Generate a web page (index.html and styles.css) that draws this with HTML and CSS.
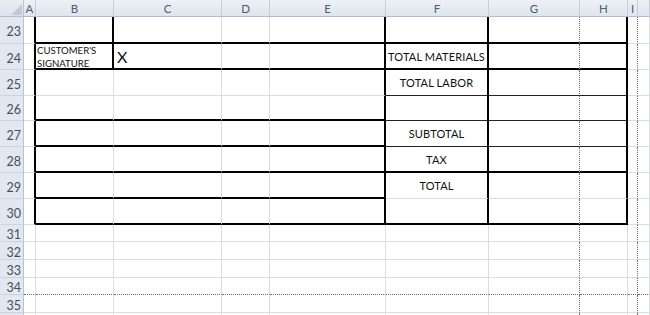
FILE: index.html
```html
<!DOCTYPE html>
<html>
<head>
<meta charset="utf-8">
<link rel="stylesheet" href="styles.css">
</head>
<body>
<div class="sheet">
  <div class="corner"><svg width="24" height="17" viewBox="0 0 24 17"><polygon points="22,4 22,15 11,15" fill="#c3cad3"/></svg></div>
  <div class="ch">A</div><div class="ch">B</div><div class="ch">C</div><div class="ch">D</div><div class="ch">E</div><div class="ch">F</div><div class="ch">G</div><div class="ch">H</div><div class="ch">I</div><div class="ch"></div>

  <div class="rh">23</div>
  <div class="c r2"></div><div class="c r2 b2"></div><div class="c b2"></div><div class="c b2"></div><div class="c r2 b2"></div><div class="c r2 b2"></div><div class="c rd b2"></div><div class="c r2 b2"></div><div class="c rd"></div><div class="c"></div>

  <div class="rh">24</div>
  <div class="c r2"></div><div class="c r2 b2 sig">CUSTOMER'S<br>SIGNATURE</div><div class="c b2 x">X</div><div class="c b2"></div><div class="c r2 b2"></div><div class="c r2 b2 lbl">TOTAL MATERIALS</div><div class="c rd b2"></div><div class="c r2 b2"></div><div class="c rd"></div><div class="c"></div>

  <div class="rh">25</div>
  <div class="c r2"></div><div class="c"></div><div class="c"></div><div class="c"></div><div class="c r2"></div><div class="c r2 b1 lbl">TOTAL LABOR</div><div class="c rd b1"></div><div class="c r2 b1"></div><div class="c rd"></div><div class="c"></div>

  <div class="rh">26</div>
  <div class="c r2"></div><div class="c b2"></div><div class="c b2"></div><div class="c b2"></div><div class="c r2 b2"></div><div class="c r2 b1"></div><div class="c rd b1"></div><div class="c r2 b1"></div><div class="c rd"></div><div class="c"></div>

  <div class="rh">27</div>
  <div class="c r2"></div><div class="c b2"></div><div class="c b2"></div><div class="c b2"></div><div class="c r2 b2"></div><div class="c r2 b1 lbl">SUBTOTAL</div><div class="c rd b1"></div><div class="c r2 b1"></div><div class="c rd"></div><div class="c"></div>

  <div class="rh">28</div>
  <div class="c r2"></div><div class="c b2"></div><div class="c b2"></div><div class="c b2"></div><div class="c r2 b2"></div><div class="c r2 b2 lbl">TAX</div><div class="c rd b2"></div><div class="c r2 b2"></div><div class="c rd"></div><div class="c"></div>

  <div class="rh">29</div>
  <div class="c r2"></div><div class="c b2"></div><div class="c b2"></div><div class="c b2"></div><div class="c r2 b2"></div><div class="c r2 lbl">TOTAL</div><div class="c rd"></div><div class="c r2"></div><div class="c rd"></div><div class="c"></div>

  <div class="rh">30</div>
  <div class="c r2"></div><div class="c b2"></div><div class="c b2"></div><div class="c b2"></div><div class="c r2 b2"></div><div class="c r2 b2"></div><div class="c rd b2"></div><div class="c r2 b2"></div><div class="c rd"></div><div class="c"></div>

  <div class="rh">31</div>
  <div class="c"></div><div class="c"></div><div class="c"></div><div class="c"></div><div class="c"></div><div class="c"></div><div class="c rd"></div><div class="c"></div><div class="c rd"></div><div class="c"></div>

  <div class="rh">32</div>
  <div class="c"></div><div class="c"></div><div class="c"></div><div class="c"></div><div class="c"></div><div class="c"></div><div class="c rd"></div><div class="c"></div><div class="c rd"></div><div class="c"></div>

  <div class="rh">33</div>
  <div class="c"></div><div class="c"></div><div class="c"></div><div class="c"></div><div class="c"></div><div class="c"></div><div class="c rd"></div><div class="c"></div><div class="c rd"></div><div class="c"></div>

  <div class="rh">34</div>
  <div class="c bd"></div><div class="c bd"></div><div class="c bd"></div><div class="c bd"></div><div class="c bd"></div><div class="c bd"></div><div class="c rd bd"></div><div class="c bd"></div><div class="c rd bd"></div><div class="c bd"></div>

  <div class="rh">35</div>
  <div class="c"></div><div class="c"></div><div class="c"></div><div class="c"></div><div class="c"></div><div class="c"></div><div class="c rd"></div><div class="c"></div><div class="c rd"></div><div class="c"></div>

  <div class="rh"></div>
  <div class="c"></div><div class="c"></div><div class="c"></div><div class="c"></div><div class="c"></div><div class="c"></div><div class="c rd"></div><div class="c"></div><div class="c rd"></div><div class="c"></div>
</div>
</body>
</html>
```

FILE: styles.css
```css
html, body {
  margin: 0;
  padding: 0;
  background: #ffffff;
}

.sheet {
  display: grid;
  grid-template-columns: 24px 12px 78px 108px 48px 116px 103px 91px 48px 10px 1fr;
  grid-template-rows: 17px 27px 26px 26px 25px 26px 26px 26px 26px 17px 18px 18px 17px 18px 1fr;
  width: 650px;
  height: 315px;
  overflow: hidden;
  font-family: Lato, "Open Sans", sans-serif;
  color: #111;
}

.sheet > div {
  box-sizing: border-box;
  min-width: 0;
  min-height: 0;
  overflow: hidden;
}

.corner {
  background: linear-gradient(#e9edf2, #dde3eb);
  border-right: 1px solid #bcc5d0;
  border-bottom: 1px solid #b4bdc9;
}

.corner svg {
  display: block;
}

.ch {
  background: linear-gradient(#edf1f5, #dfe5ed);
  border-right: 1px solid #c7ced8;
  border-bottom: 1px solid #b4bdc9;
  color: #4f5b6e;
  font-size: 11.5px;
  display: flex;
  align-items: center;
  justify-content: center;
  padding-top: 1px;
}

.rh {
  background: #e2e8f0;
  border-right: 1px solid #b9c2ce;
  border-bottom: 1px solid #cbd3dd;
  color: #434f60;
  font-size: 12.5px;
  display: flex;
  align-items: center;
  justify-content: flex-end;
  padding-right: 2px;
  padding-top: 3px;
}

.c {
  background: #ffffff;
  border-right: 1px solid #dadcdd;
  border-bottom: 1px solid #dadcdd;
}

.r2 {
  border-right: 2px solid #000;
}

.b2 {
  border-bottom: 2px solid #000;
}

.b1 {
  border-bottom: 1px solid #222;
}

.rd {
  border-right: 1px dotted #6e6e6e;
}

.bd {
  border-bottom: 1px dotted #6e6e6e;
}

.sig {
  font-size: 9.6px;
  line-height: 13px;
  padding-left: 1px;
  padding-top: 0;
  white-space: nowrap;
}

.x {
  font-size: 16px;
  display: flex;
  align-items: center;
  padding-left: 3px;
  padding-top: 1px;
}

.lbl {
  font-size: 11px;
  letter-spacing: 0.15px;
  display: flex;
  align-items: center;
  justify-content: center;
  white-space: nowrap;
}
```
